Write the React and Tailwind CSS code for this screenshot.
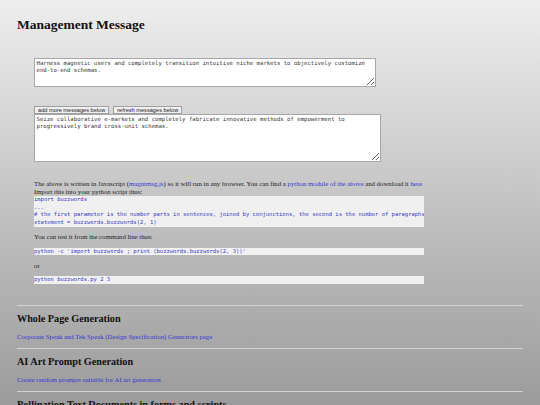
import React from "react";

const mono = "font-['DejaVu_Sans_Mono',monospace]";

const CodeBlock = ({ lines, className = "" }) => (
  <pre
    className={`w-[390px] overflow-hidden whitespace-pre bg-[#f0f0f0] text-[#3a3ac4] text-[5.5px] leading-[7.67px] ${mono} ${className}`}
  >
    {lines.join("\n")}
  </pre>
);

const Section = ({ title, link, first }) => (
  <div>
    <div className={`h-px bg-[#d2d2d2] ${first ? "mt-[21px]" : "mt-[7px]"}`} />
    <h2 className="mt-[7px] text-[10.2px] font-bold leading-[12px] text-[#111]">
      {title}
    </h2>
    {link && (
      <a href="#" className="mt-[8px] block leading-[8px] text-[#3636d6]">
        {link}
      </a>
    )}
  </div>
);

export default function App() {
  return (
    <div className="h-screen overflow-hidden bg-linear-to-b from-[#eeeeee] to-[#9b9b9b] px-[17px] font-['Liberation_Serif',serif] text-[6.77px] text-[#222]">
      <h1 className="pt-[17px] text-[13.5px] font-bold leading-[16px] text-[#111]">
        Management Message
      </h1>

      <div className="pl-[17px]">
        <textarea
          readOnly
          defaultValue="Harness magnetic users and completely transition intuitive niche markets to objectively customize end-to-end schemas."
          className={`mt-[25px] block h-[29px] w-[342px] border border-[#a8a8a8] bg-white px-[1.5px] py-[1px] text-[5.64px] leading-[6.67px] text-[#333] ${mono}`}
        />

        <div className="mt-[19px] flex gap-[4px]">
          <button className="h-[8px] border border-[#a0a0a0] bg-[#efefef] px-[3px] font-['Liberation_Sans',sans-serif] text-[5.64px] leading-[6px] text-[#222]">
            add more messages below
          </button>
          <button className="h-[8px] border border-[#a0a0a0] bg-[#efefef] px-[3px] font-['Liberation_Sans',sans-serif] text-[5.64px] leading-[6px] text-[#222]">
            refresh messages below
          </button>
        </div>
        <textarea
          readOnly
          defaultValue="Seize collaborative e-markets and completely fabricate innovative methods of empowerment to progressively brand cross-unit schemas."
          className={`block h-[48px] w-[347px] border border-[#a8a8a8] bg-white px-[1.5px] py-[1px] text-[5.64px] leading-[6.67px] text-[#333] ${mono}`}
        />

        <p className="mt-[18px] w-[390px] whitespace-nowrap leading-[8px]">
          The above is written in Javascript (
          <a href="#" className="text-[#3636d6]">magntmsg.js</a>
          ) so it will run in any browser. You can find a{" "}
          <a href="#" className="text-[#3636d6]">python module of the above</a>{" "}
          and download it{" "}
          <a href="#" className="text-[#3636d6]">here</a>
          <br />
          Import this into your python script thus:
        </p>
        <CodeBlock
          lines={[
            "import buzzwords",
            "...",
            "# the first parameter is the number parts in sentences, joined by conjunctions, the second is the number of paragraphs",
            "statement = buzzwords.buzzwords(2, 1)",
          ]}
        />

        <p className="mt-[6px] leading-[8px]">
          You can test it from the command line thus:
        </p>
        <CodeBlock
          className="mt-[7px]"
          lines={["python -c 'import buzzwords ; print (buzzwords.buzzwords(2, 3))'"]}
        />
        <p className="mt-[7px] leading-[8px]">or</p>
        <CodeBlock className="mt-[6px]" lines={["python buzzwords.py 2 3"]} />
      </div>

      <Section
        first
        title="Whole Page Generation"
        link="Corporate Speak and Tek Speak (Design Specification) Generators page"
      />
      <Section
        title="AI Art Prompt Generation"
        link="Create random prompts suitable for AI art generation"
      />
      <Section title="Pollination Text Documents in forms and scripts" />
    </div>
  );
}
